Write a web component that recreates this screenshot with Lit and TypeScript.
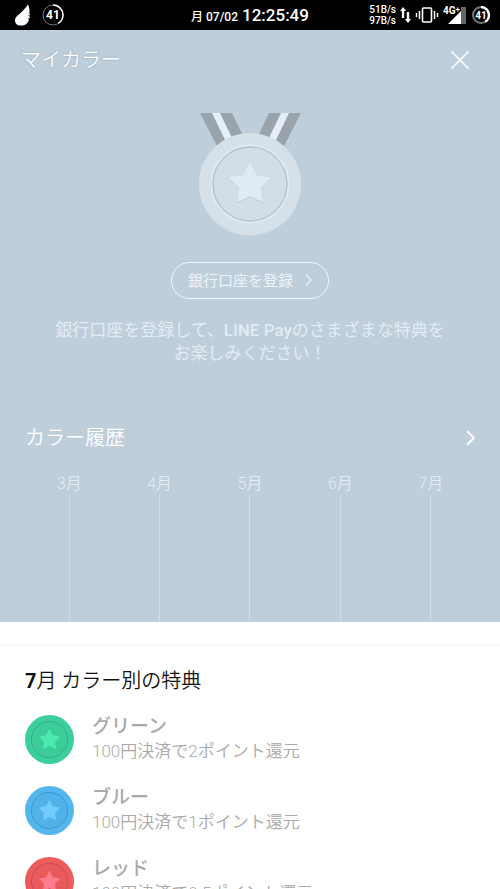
import { LitElement, html, css, svg } from "lit";
import { customElement, property } from "lit/decorators.js";

const STAR =
  "M50 30.5 L55.8 42.8 L69 44.8 L59.6 54.4 L61.8 67.8 L50 61.6 L38.2 67.8 L40.4 54.4 L31 44.8 L44.2 42.8 Z";

/** Round coin with an engraved ring and a star, drawn in a 100x100 box. */
@customElement("color-coin")
class ColorCoin extends LitElement {
  @property() base = "";
  @property() face = "";
  @property() ring = "";
  @property() star = "";

  static styles = css`
    :host { display: block; }
    svg { display: block; width: 100%; height: 100%; }
  `;

  render() {
    return html`<svg viewBox="0 0 100 100" aria-hidden="true">
      <circle cx="50" cy="50" r="50" fill=${this.base} />
      <circle cx="50" cy="50" r="37" fill=${this.face} stroke=${this.ring} stroke-width="2" />
      <path d=${STAR} fill=${this.star} stroke=${this.star} stroke-width="3" stroke-linejoin="round" />
    </svg>`;
  }
}

@customElement("status-bar")
class StatusBar extends LitElement {
  static styles = css`
    :host {
      display: grid;
      grid-template-columns: 1fr auto 1fr;
      align-items: center;
      height: 30px;
      padding: 0 9px;
      background: #000;
      color: #fff;
      font-family: Roboto, "Noto Sans CJK JP", sans-serif;
    }
    svg { display: block; flex: none; }
    .left, .right { display: flex; align-items: center; }
    .left { gap: 10px; padding-left: 5px; }
    .right { justify-content: flex-end; gap: 4px; }
    .clock { display: flex; align-items: baseline; gap: 4px; font-weight: 500; }
    .date { font-size: 12px; }
    .time { font-size: 17px; }
    .speed { font-size: 10px; line-height: 11px; font-weight: 500; text-align: right; }
    text { font-weight: 700; fill: #fff; }
    .num { font-size: 12px; text-anchor: middle; }
    .small { font-size: 10px; }
    .net { font-size: 10px; }
    .plus { font-size: 8px; }
  `;

  private gauge(size: number, width: number, cls: string) {
    const c = size / 2;
    const r = c - width;
    return html`<svg width=${size} height=${size} viewBox="0 0 ${size} ${size}">
      <circle cx=${c} cy=${c} r=${r} fill="none" stroke="#777" stroke-width=${width} />
      <circle cx=${c} cy=${c} r=${r} fill="none" stroke="#fff" stroke-width=${width + 0.4}
        pathLength="100" stroke-dasharray="41 100" transform="rotate(-90 ${c} ${c})" />
      <text class="num ${cls}" x=${c} y=${c + 4}>41</text>
    </svg>`;
  }

  render() {
    return html`
      <div class="left">
        <svg width="18" height="22" viewBox="0 0 18 22" fill="#fff">
          <path d="M13.8 0.5 C15 2.5 15.7 5 15.6 8.6 L14.2 9 L15.8 9.6 V11.2 L14 11.8 L15.6 12.4 V14.2 L13.6 14.8 L15 15.4 C13.8 19.6 11 21.5 7 21.5 C3.2 21.5 1 19.4 1 16.4 C1 12.6 4.2 11.2 7 8.4 C10 5.6 12 3.6 13.8 0.5 Z" />
        </svg>
        ${this.gauge(22, 1, "")}
      </div>
      <div class="clock"><span class="date">月 07/02</span><span class="time">12:25:49</span></div>
      <div class="right">
        <div class="speed">51B/s<br />97B/s</div>
        <svg width="11" height="16" viewBox="0 0 11 16" fill="#fff">
          <path d="M3 0 L6 4 H4.2 V11 H1.8 V4 H0 Z M8 16 L11 12 H9.2 V5 H6.8 V12 H5 Z" />
        </svg>
        <svg width="24" height="18" viewBox="0 0 24 18" fill="none" stroke="#fff">
          <rect x="7.5" y="2" width="9" height="14" rx="1" stroke-width="1.6" />
          <path d="M1.5 7 V11 M4.5 5 V13 M19.5 5 V13 M22.5 7 V11" stroke-width="1.5" />
        </svg>
        <svg width="24" height="20" viewBox="0 0 24 20">
          <path d="M18 2 H23 V19 H18 Z" fill="#666" />
          <path d="M5 19 L18 6 V19 Z" fill="#fff" />
          <text class="net" x="0" y="9">4G<tspan class="plus" dy="-2">+</tspan></text>
        </svg>
        ${this.gauge(20, 2, "small")}
      </div>
    `;
  }
}

interface Benefit {
  name: string;
  detail: string;
  base: string;
  face: string;
  ring: string;
  star: string;
}

const BENEFITS: Benefit[] = [
  { name: "グリーン", detail: "100円決済で2ポイント還元", base: "#3ccf9c", face: "#3dcb99", ring: "#2fb184", star: "#4ceab1" },
  { name: "ブルー", detail: "100円決済で1ポイント還元", base: "#53b6ec", face: "#50b2e9", ring: "#3b96cf", star: "#72ccff" },
  { name: "レッド", detail: "100円決済で0.5ポイント還元", base: "#eb5c5c", face: "#e85a5b", ring: "#cb4a4c", star: "#ff7c8b" },
];

const MONTHS = ["3月", "4月", "5月", "6月", "7月"];

const chevron = (w: number, h: number, stroke: number) =>
  svg`<svg width=${w} height=${h} viewBox="0 0 8 14" fill="none" stroke="currentColor" stroke-width=${stroke} aria-hidden="true"><path d="M1 1 L7 7 L1 13" /></svg>`;

@customElement("app-root")
class AppRoot extends LitElement {
  static styles = css`
    :host {
      display: flex;
      flex-direction: column;
      height: 100vh;
      overflow: hidden;
      background: #fff;
      font-family: Roboto, "Noto Sans CJK JP", sans-serif;
    }
    * { box-sizing: border-box; }
    h1, h2, h3, p, ul, ol { margin: 0; padding: 0; font-weight: 400; }
    ul, ol { list-style: none; }
    button {
      border: 0;
      padding: 0;
      background: none;
      color: inherit;
      font: inherit;
      cursor: pointer;
    }
    svg { display: block; }
    status-bar { flex: none; }
    main { flex: 1; min-height: 0; overflow-y: auto; scrollbar-width: none; }
    .hero {
      display: flex;
      flex-direction: column;
      background: #bfcedb;
      color: #fff;
    }
    header {
      display: flex;
      align-items: center;
      justify-content: space-between;
      height: 60px;
      padding: 0 30px 0 21px;
    }
    h1 {
      font-size: 20px;
      line-height: 30px;
      text-shadow: 0 0 2px #8c9aa6;
    }
    .medal { align-self: center; margin-top: 22px; }
    .register {
      display: flex;
      align-items: center;
      justify-content: center;
      gap: 12px;
      align-self: center;
      height: 37px;
      margin-top: 25px;
      padding: 0 16px 2px;
      border: 1px solid #f5f8fc;
      border-radius: 19px;
      color: #edf3f9;
      font-size: 15px;
    }
    .lead {
      margin-top: 20px;
      padding: 0 48px;
      color: #e3ebf4;
      font-size: 17px;
      line-height: 23px;
      text-align: center;
    }
    .lead b { font-weight: 500; }
    .history {
      display: flex;
      align-items: center;
      justify-content: space-between;
      margin-top: 57px;
      padding: 0 25px;
      font-size: 20px;
      line-height: 32px;
    }
    h1, h2 { font-weight: 350; }
    .history h2 { font-size: 20px; }
    .months {
      display: grid;
      grid-template-columns: repeat(5, 1fr);
      margin-top: 19px;
      padding: 0 24px;
      color: #e3ebf4;
      font-size: 16px;
      line-height: 22px;
      font-weight: 350;
      text-align: center;
    }
    .months li::after {
      content: "";
      display: block;
      width: 1px;
      height: 127px;
      margin: 0 auto;
      background: #d3dde9;
    }
    .benefits {
      margin-top: 22px;
      padding: 20px 25px;
      border-top: 2px solid #f7f7f7;
    }
    .benefits h2 {
      color: #111;
      font-size: 20px;
      line-height: 30px;
    }
    .benefits ul {
      display: flex;
      flex-direction: column;
      gap: 21px;
      margin-top: 18px;
    }
    .benefits li { display: flex; align-items: center; gap: 18px; color: #aaa; }
    color-coin { width: 49px; height: 49px; flex: none; }
    h3 { font-size: 19px; line-height: 25px; font-weight: 500; }
    .benefits p { font-size: 17px; line-height: 25px; font-weight: 350; }
  `;

  render() {
    return html`
      <status-bar></status-bar>
      <main>
        <section class="hero">
          <header>
            <h1>マイカラー</h1>
            <button aria-label="閉じる">
              <svg width="20" height="20" viewBox="0 0 20 20" fill="none" stroke="#fff" stroke-width="1.6">
                <path d="M1 1 L19 19 M19 1 L1 19" />
              </svg>
            </button>
          </header>
          <svg class="medal" width="104" height="125" viewBox="0 0 104 125" aria-hidden="true">
            <path d="M2 1 H34 L50 34 H19 Z M71 1 H103 L86 34 H55 Z" fill="#98a3ac" />
            <path d="M14 1 H22 L36 30 H28 Z M83 1 H91 L77 30 H69 Z" fill="#e6eff8" />
            <circle cx="52" cy="73" r="51" fill="#cbd6df" />
            <circle cx="52" cy="72" r="51" fill="#d6e0e8" />
            <circle cx="52" cy="72" r="38.5" fill="none" stroke="#e2eaf1" stroke-width="2" />
            <circle cx="52" cy="72" r="37" fill="#d3dde5" stroke="#b4c0ca" stroke-width="1.3" />
            <path d="M52 52 L58 64.6 L71.5 66.5 L61.6 76 L64.2 89.5 L52 84 L39.8 89.5 L42.4 76 L32.5 66.5 L46 64.6 Z"
              fill="#c7d2dc" stroke="#c7d2dc" stroke-width="3" stroke-linejoin="round" />
            <path d="M52 51.5 L58 64 L71.5 66 L61.6 75.5 L64.2 88.7 L52 83.2 L39.8 88.7 L42.4 75.5 L32.5 66 L46 64 Z"
              fill="#e0eaf3" stroke="#e0eaf3" stroke-width="2" stroke-linejoin="round" />
          </svg>
          <button class="register">銀行口座を登録 ${chevron(7, 12, 1.6)}</button>
          <p class="lead">銀行口座を登録して、<b>LINE Pay</b>のさまざまな特典を<br />お楽しみください！</p>
          <div class="history">
            <h2>カラー履歴</h2>
            <button aria-label="カラー履歴を見る">${chevron(9, 16, 1.6)}</button>
          </div>
          <ol class="months">
            ${MONTHS.map((m) => html`<li>${m}</li>`)}
          </ol>
        </section>
        <section class="benefits">
          <h2><b>7</b>月 カラー別の特典</h2>
          <ul>
            ${BENEFITS.map(
              (b) => html`<li>
                <color-coin .base=${b.base} .face=${b.face} .ring=${b.ring} .star=${b.star}></color-coin>
                <div>
                  <h3>${b.name}</h3>
                  <p>${b.detail}</p>
                </div>
              </li>`
            )}
          </ul>
        </section>
      </main>
    `;
  }
}
